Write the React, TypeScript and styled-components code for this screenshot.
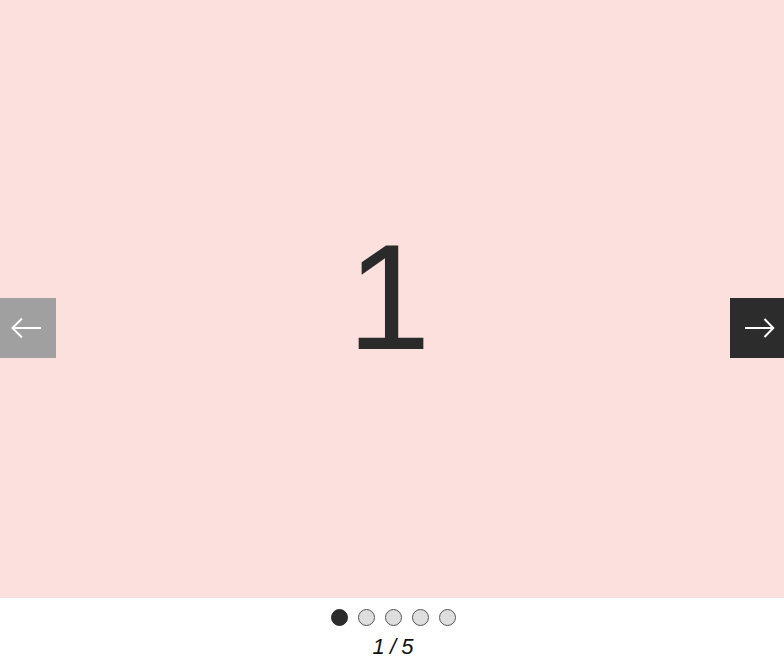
import React, { useState } from "react";
import styled, { createGlobalStyle } from "styled-components";

const Global = createGlobalStyle`
  html, body { margin: 0; padding: 0; background: #ffffff; }
  body { font-family: "Liberation Sans", Arial, sans-serif; }
`;

const Carousel = styled.div`
  width: 784px;
  display: flex;
  flex-direction: column;
`;

const Stage = styled.div`
  position: relative;
  height: 598px;
  background: #fbe0de;
  display: flex;
  align-items: center;
  justify-content: center;
`;

const Slide = styled.div`
  font-family: "Liberation Sans", Arial, sans-serif;
  font-size: 150px;
  line-height: 1;
  color: #2a2a2a;
  padding-bottom: 4px;
  margin-left: -6px;
`;

const NavButton = styled.button<{ $side: "left" | "right"; $disabled?: boolean }>`
  position: absolute;
  top: 298px;
  ${(p) => (p.$side === "left" ? "left: 0; padding: 0 4px 0 0;" : "right: 0; padding: 0 0 0 6px;")}
  width: ${(p) => (p.$side === "left" ? "56px" : "54px")};
  height: 60px;
  border: none;
  margin: 0;
  background: ${(p) => (p.$disabled ? "#a0a0a0" : "#2c2c2c")};
  display: flex;
  align-items: center;
  justify-content: center;
  cursor: pointer;
`;

const Footer = styled.div`
  height: 74px;
  display: flex;
  flex-direction: column;
  align-items: center;
`;

const Dots = styled.div`
  display: flex;
  gap: 10px;
  margin-top: 11px;
  margin-left: 2px;
`;

const Dot = styled.span<{ $active?: boolean }>`
  box-sizing: border-box;
  width: 17px;
  height: 17px;
  border-radius: 50%;
  border: 1px solid ${(p) => (p.$active ? "#2c2c2c" : "#555")};
  background: ${(p) => (p.$active ? "#2c2c2c" : "#dedede")};
`;

const Counter = styled.div`
  font-family: "Liberation Sans", Arial, sans-serif;
  font-style: italic;
  font-size: 22px;
  line-height: 26px;
  color: #111;
  margin-top: 8px;
  margin-left: 2px;
  word-spacing: -1px;
`;

const Arrow = ({ dir }: { dir: "left" | "right" }) => (
  <svg width="30" height="22" viewBox="0 0 30 22" fill="none" stroke="#fff" strokeWidth="2">
    {dir === "left" ? (
      <>
        <path d="M30 11H1.5" />
        <path d="M11 1.5L1.5 11l9.5 9.5" />
      </>
    ) : (
      <>
        <path d="M0 11h28.5" />
        <path d="M19.5 2l8.8 9-8.8 9" />
      </>
    )}
  </svg>
);

export default function App() {
  const [index] = useState(0);
  const total = 5;
  return (
    <>
      <Global />
      <Carousel>
        <Stage>
          <NavButton $side="left" $disabled aria-label="previous">
            <Arrow dir="left" />
          </NavButton>
          <Slide>{index + 1}</Slide>
          <NavButton $side="right" aria-label="next">
            <Arrow dir="right" />
          </NavButton>
        </Stage>
        <Footer>
          <Dots>
            {Array.from({ length: total }).map((_, i) => (
              <Dot key={i} $active={i === index} />
            ))}
          </Dots>
          <Counter>
            {index + 1} / {total}
          </Counter>
        </Footer>
      </Carousel>
    </>
  );
}
